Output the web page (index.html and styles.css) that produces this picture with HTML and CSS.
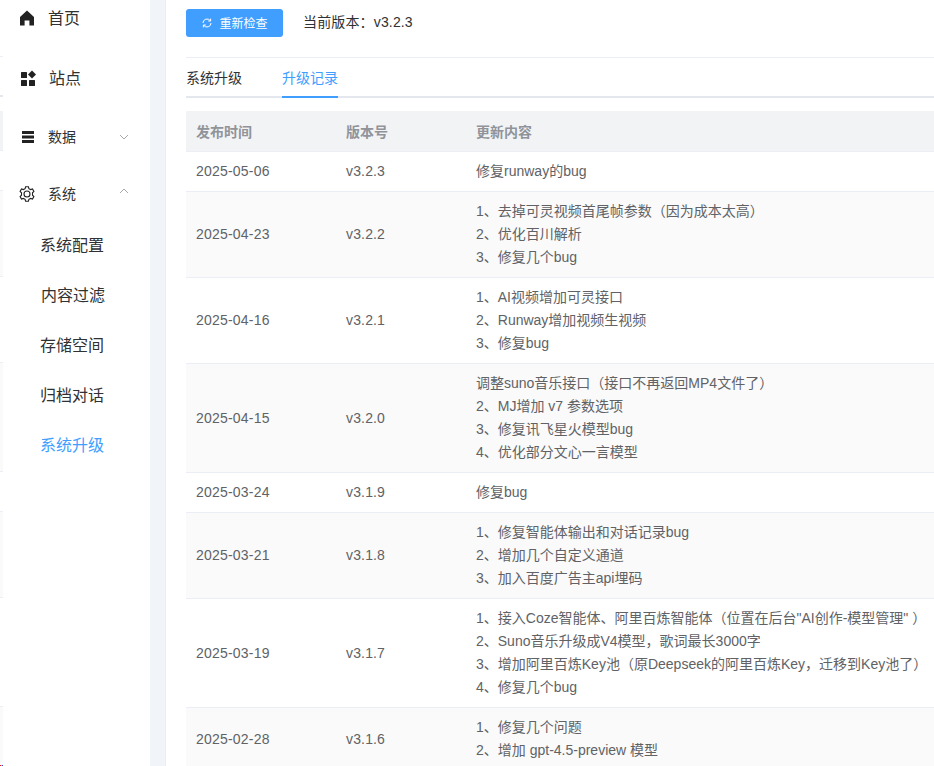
FILE: index.html
```html
<!DOCTYPE html>
<html lang="en">
<head>
    <meta charset="UTF-8">
    <meta name="viewport" content="width=device-width, initial-scale=1.0">
    <title>系统升级</title>
    <link rel="stylesheet" href="styles.css">
</head>
<body>
    <div class="edge-strip">
        <div class="edge-top"></div>
        <div class="edge-tab"></div>
        <div class="edge-head"></div>
        <div class="edge-row r1"></div>
        <div class="edge-row r3 odd"></div>
        <div class="edge-row r3"></div>
        <div class="edge-row r4 odd"></div>
        <div class="edge-row r1"></div>
        <div class="edge-row r3 odd"></div>
        <div class="edge-row r4"></div>
        <div class="edge-row r2 odd"></div>
        <div class="edge-dots"></div>
    </div>

    <aside class="sidebar">
        <ul class="menu">
            <li class="menu-item item-home">
                <svg class="menu-icon" viewBox="0 0 16 16"><path d="M8 .5 L15 7 V15.5 H10.4 V10.5 H5.6 V15.5 H1 V7 Z" fill="#222"/></svg>
                <span class="menu-title">首页</span>
            </li>
            <li class="menu-item item-site">
                <svg class="menu-icon" viewBox="0 0 16 16">
                    <rect x="1" y="2" width="6" height="6" rx="0.5" fill="#222"/>
                    <path d="M12 .5 L16 4.5 L12 8.5 L8 4.5 Z" fill="#222"/>
                    <rect x="1" y="10" width="6" height="6" rx="0.5" fill="#222"/>
                    <rect x="9" y="10" width="6" height="6" rx="0.5" fill="#222"/>
                </svg>
                <span class="menu-title">站点</span>
            </li>
            <li class="menu-item item-data">
                <svg class="menu-icon" viewBox="0 0 16 16">
                    <rect x="2" y="2" width="12" height="3" fill="#222"/>
                    <rect x="2" y="6.5" width="12" height="3" fill="#222"/>
                    <rect x="2" y="11" width="12" height="3" fill="#222"/>
                </svg>
                <span class="menu-title small">数据</span>
                <svg class="chevron" viewBox="0 0 10 6"><path d="M1 1 L5 5 L9 1" fill="none" stroke="#909399" stroke-width="0.8"/></svg>
            </li>
            <li class="menu-item item-system">
                <svg class="menu-icon" viewBox="0 0 16 16" fill="none" stroke="#222" stroke-width="1.1">
                    <path d="M6.6 .8 H9.4 L9.9 2.7 L11.6 3.6 L13.5 3 L14.9 5.4 L13.5 6.8 V9.2 L14.9 10.6 L13.5 13 L11.6 12.4 L9.9 13.3 L9.4 15.2 H6.6 L6.1 13.3 L4.4 12.4 L2.5 13 L1.1 10.6 L2.5 9.2 V6.8 L1.1 5.4 L2.5 3 L4.4 3.6 L6.1 2.7 Z"/>
                    <circle cx="8" cy="8" r="3"/>
                </svg>
                <span class="menu-title small">系统</span>
                <svg class="chevron" viewBox="0 0 10 6"><path d="M1 5 L5 1 L9 5" fill="none" stroke="#909399" stroke-width="0.8"/></svg>
            </li>
        </ul>
        <ul class="submenu">
            <li class="submenu-item">系统配置</li>
            <li class="submenu-item nudge">内容过滤</li>
            <li class="submenu-item">存储空间</li>
            <li class="submenu-item">归档对话</li>
            <li class="submenu-item active">系统升级</li>
        </ul>
    </aside>

    <div class="gutter"></div>

    <main class="content">
        <div class="toolbar">
            <button class="check-btn">
                <svg class="check-icon" viewBox="0 0 12 12" fill="none" stroke="#fff" stroke-width="1">
                    <path d="M2 6 A4 4 0 0 1 9.2 3.6"/>
                    <path d="M10 6 A4 4 0 0 1 2.8 8.4"/>
                    <path d="M9.6 1.6 V4 H7.2"/>
                    <path d="M2.4 10.4 V8 H4.8"/>
                </svg>
                <span class="check-label">重新检查</span>
            </button>
            <span class="version">当前版本：v3.2.3</span>
        </div>

        <div class="tabs">
            <div class="tab">系统升级</div>
            <div class="tab active">升级记录</div>
        </div>

        <table class="log-table">
            <thead>
                <tr>
                    <th class="col-date">发布时间</th>
                    <th class="col-ver">版本号</th>
                    <th>更新内容</th>
                </tr>
            </thead>
            <tbody>
                <tr><td class="date">2025-05-06</td><td class="ver">v3.2.3</td><td>修复runway的bug</td></tr>
                <tr><td class="date">2025-04-23</td><td class="ver">v3.2.2</td><td>1、去掉可灵视频首尾帧参数（因为成本太高）<br>2、优化百川解析<br>3、修复几个bug</td></tr>
                <tr><td class="date">2025-04-16</td><td class="ver">v3.2.1</td><td>1、AI视频增加可灵接口<br>2、Runway增加视频生视频<br>3、修复bug</td></tr>
                <tr class="even-lines"><td class="date">2025-04-15</td><td class="ver">v3.2.0</td><td>调整suno音乐接口（接口不再返回MP4文件了）<br>2、MJ增加 v7 参数选项<br>3、修复讯飞星火模型bug<br>4、优化部分文心一言模型</td></tr>
                <tr><td class="date">2025-03-24</td><td class="ver">v3.1.9</td><td>修复bug</td></tr>
                <tr><td class="date">2025-03-21</td><td class="ver">v3.1.8</td><td>1、修复智能体输出和对话记录bug<br>2、增加几个自定义通道<br>3、加入百度广告主api埋码</td></tr>
                <tr class="even-lines"><td class="date">2025-03-19</td><td class="ver">v3.1.7</td><td>1、接入Coze智能体、阿里百炼智能体（位置在后台"AI创作-模型管理" ）<br>2、Suno音乐升级成V4模型，歌词最长3000字<br>3、增加阿里百炼Key池（原Deepseek的阿里百炼Key，迁移到Key池了）<br>4、修复几个bug</td></tr>
                <tr class="even-lines"><td class="date">2025-02-28</td><td class="ver">v3.1.6</td><td>1、修复几个问题<br>2、增加 gpt-4.5-preview 模型</td></tr>
            </tbody>
        </table>
    </main>
</body>
</html>
```

FILE: styles.css
```css
* {
    margin: 0;
    padding: 0;
    box-sizing: border-box;
    font-family: "Liberation Sans", Arial, "Noto Sans CJK SC", sans-serif;
}

html, body {
    height: 766px;
    overflow: hidden;
}

body {
    display: flex;
    background: #fff;
    color: #303133;
}

/* rows of the page behind, showing at the left edge */
.edge-strip {
    width: 3px;
    flex-shrink: 0;
    position: relative;
}

.edge-top {
    height: 57px;
    border-bottom: 1px solid #ebeef5;
}

.edge-tab {
    height: 40px;
    border-bottom: 2px solid #e4e7ed;
    margin-bottom: 14px;
}

.edge-head {
    height: 40px;
    background: #f2f3f5;
    border-bottom: 1px solid #ebeef5;
}

.edge-row {
    border-bottom: 1px solid #ebeef5;
}

.edge-row.odd {
    background: #fafafa;
}

.r1 { height: 40px; }
.r2 { height: 63px; }
.r3 { height: 86px; }
.r4 { height: 109px; }

.edge-dots {
    position: absolute;
    left: 0;
    top: 765px;
    width: 3px;
    height: 1px;
    background: linear-gradient(to right, #e02020 0 1px, #e0c020 1px 2px, #2040e0 2px 3px);
}

.sidebar {
    width: 147px;
    flex-shrink: 0;
    background: #fff;
}

.menu {
    list-style: none;
}

.menu-item {
    display: flex;
    align-items: center;
    height: 36px;
    position: relative;
    color: #303133;
}

.menu-icon {
    width: 16px;
    height: 16px;
    flex-shrink: 0;
}

.menu-title {
    font-size: 16px;
    padding-bottom: 2px;
}

.menu-title.small {
    font-size: 14px;
}

.item-home { padding-left: 16px; }
.item-home .menu-title { margin-left: 13px; }

.item-site { padding-left: 17px; margin-top: 24px; }
.item-site .menu-title { margin-left: 13px; }

.item-data { padding-left: 17px; margin-top: 23px; }
.item-data .menu-title { margin-left: 12px; }

.item-system { padding-left: 16px; margin-top: 21px; }
.item-system .menu-title { margin-left: 13px; }

.chevron {
    position: absolute;
    left: 116px;
    top: 15px;
    width: 10px;
    height: 6px;
}

.item-system .chevron {
    top: 12px;
}

.submenu {
    list-style: none;
    margin-top: 9px;
}

.submenu-item {
    height: 50px;
    line-height: 50px;
    padding-left: 37px;
    font-size: 16px;
    color: #303133;
}

.submenu-item.nudge {
    padding-left: 38px;
}

.submenu-item.active {
    color: #409eff;
}

.gutter {
    width: 16px;
    flex-shrink: 0;
    background: #f1f4f9;
    border-right: 1px solid #e9edf3;
}

.content {
    flex: 1;
    min-width: 0;
    padding: 9px 0 0 20px;
}

.toolbar {
    display: flex;
    align-items: center;
    height: 28px;
    gap: 20px;
}

.check-btn {
    display: flex;
    align-items: center;
    justify-content: center;
    gap: 6px;
    width: 97px;
    height: 28px;
    border: none;
    border-radius: 3px;
    background: #409eff;
    color: #fff;
    font-size: 12px;
}

.check-icon {
    width: 12px;
    height: 12px;
}

.check-label {
    padding-bottom: 2px;
}

.version {
    font-size: 14px;
    color: #303133;
    padding-bottom: 4px;
    letter-spacing: 0.15px;
}

.tabs {
    display: flex;
    gap: 40px;
    margin-top: 20px;
    height: 41px;
    border-top: 1px solid #ebeef5;
    border-bottom: 2px solid #e4e7ed;
}

.tab {
    height: 40px;
    line-height: 40px;
    font-size: 14px;
    color: #303133;
}

.tab.active {
    color: #409eff;
    border-bottom: 2px solid #409eff;
}

.log-table {
    width: 100%;
    margin-top: 13px;
    border-collapse: collapse;
    table-layout: fixed;
    font-size: 14px;
    color: #606266;
}

.col-date { width: 150px; }
.col-ver { width: 130px; }

.log-table th {
    height: 40px;
    padding: 0 10px;
    text-align: left;
    font-weight: 700;
    color: #909399;
    background: #f2f3f5;
    border-bottom: 1px solid #ebeef5;
}

.log-table td {
    padding: 8px 10px;
    line-height: 23px;
    border-bottom: 1px solid #ebeef5;
    white-space: nowrap;
}

.log-table td.date {
    letter-spacing: 0.2px;
}

.log-table td.ver {
    letter-spacing: 0.15px;
}

.log-table .even-lines td.date,
.log-table .even-lines td.ver {
    line-height: 24px;
    padding-bottom: 7px;
}

.log-table tbody tr:nth-child(even) td {
    background: #fafafa;
}
```
